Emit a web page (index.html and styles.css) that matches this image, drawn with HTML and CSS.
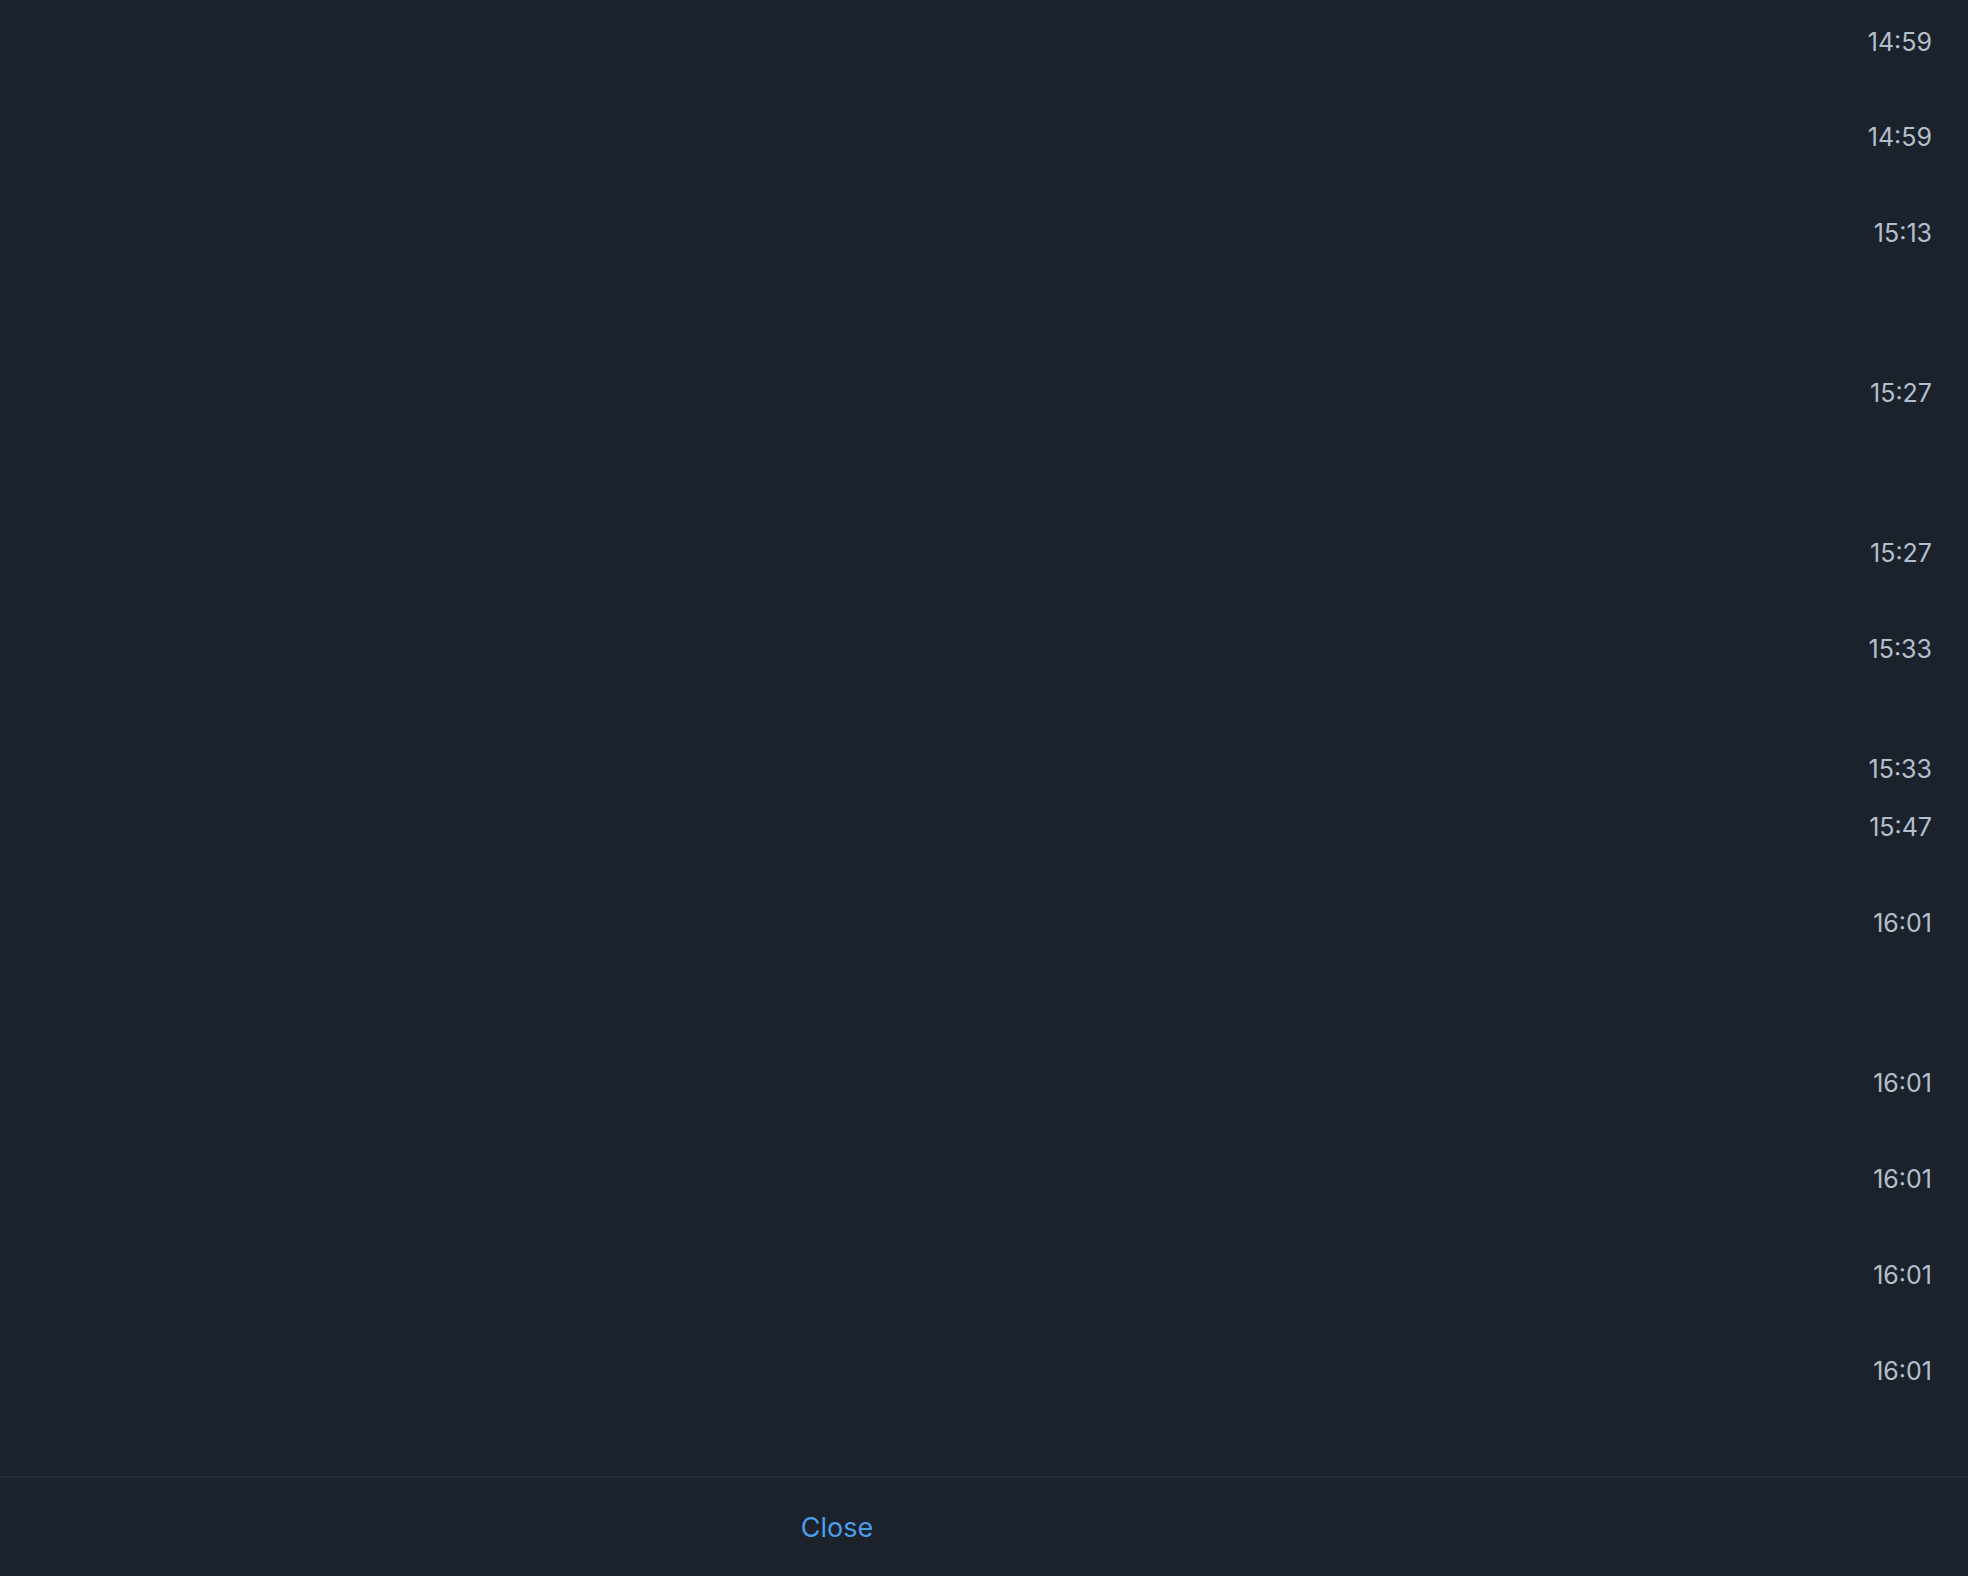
FILE: index.html
```html
<!DOCTYPE html>
<html lang="en">
<head>
  <meta charset="UTF-8">
  <title>Message times</title>
  <link rel="stylesheet" href="styles.css">
</head>
<body>
  <div class="sheet">
    <div class="list">
      <div class="row first"><span class="time">14:59</span></div>
      <div class="row"><span class="time">14:59</span></div>
      <div class="row tall"><span class="time">15:13</span></div>
      <div class="row tall"><span class="time">15:27</span></div>
      <div class="row"><span class="time">15:27</span></div>
      <div class="row mid"><span class="time">15:33</span></div>
      <div class="row short"><span class="time">15:33</span></div>
      <div class="row"><span class="time">15:47</span></div>
      <div class="row tall"><span class="time">16:01</span></div>
      <div class="row"><span class="time">16:01</span></div>
      <div class="row"><span class="time">16:01</span></div>
      <div class="row"><span class="time">16:01</span></div>
      <div class="row"><span class="time">16:01</span></div>
    </div>

    <div class="footer">
      <button class="close">Close</button>
    </div>
  </div>
</body>
</html>
```

FILE: styles.css
```css
html, body {
  margin: 0;
  height: 100%;
}

body {
  background: #1b222c;
  font-family: Inter, "Noto Sans", sans-serif;
  overflow: hidden;
}

.sheet {
  display: flex;
  flex-direction: column;
  height: 100vh;
}

.list {
  flex: 1;
  overflow: hidden;
  display: flex;
  flex-direction: column;
}

.row {
  flex: 0 0 96px;
  box-sizing: border-box;
  padding: 27px 36px 0;
  text-align: right;
}

.row.first {
  flex-basis: 95px;
}

.row.short {
  flex-basis: 56px;
}

.row.mid {
  flex-basis: 120px;
}

.row.tall {
  flex-basis: 160px;
}

.time {
  display: block;
  font-size: 25px;
  line-height: 31px;
  color: #b3bfcd;
}

.footer {
  flex: 0 0 98px;
  display: grid;
  grid-template-columns: 1674px 1fr;
  border-top: 2px solid #232d3a;
}

.close {
  background: none;
  border: 0;
  padding: 0;
  font-family: inherit;
  font-size: 27px;
  color: #4b9de8;
  cursor: pointer;
}
```
